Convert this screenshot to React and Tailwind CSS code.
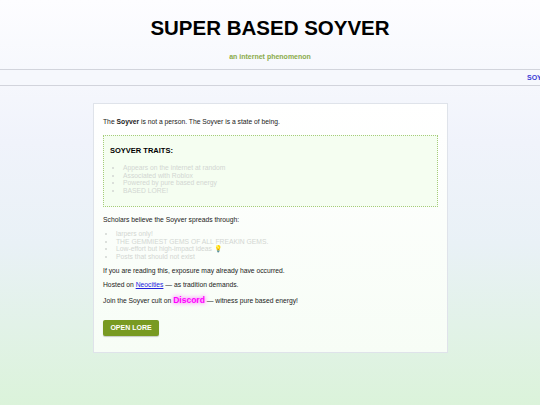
export default function App() {
  const traits = [
    "Appears on the internet at random",
    "Associated with Roblox",
    "Powered by pure based energy",
    "BASED LORE!",
  ];
  const spreads = [
    "larpers only!",
    "THE GEMMIEST GEMS OF ALL FREAKIN GEMS.",
    "Low-effort but high-impact ideas 💡",
    "Posts that should not exist",
  ];

  return (
    <div
      className="min-h-[405px] w-[540px] overflow-hidden bg-[linear-gradient(to_bottom,#fdfdff_0%,#f0f3fb_35%,#e9f1f6_60%,#dbf3da_100%)] text-[#222] text-[6.75px] leading-[7.8px]"
      style={{ fontFamily: '"Liberation Sans", Arial, sans-serif' }}
    >
      <header className="pt-[15px] text-center">
        <h1 className="text-[20.5px] font-bold leading-[26px] text-black">SUPER BASED SOYVER</h1>
        <p className="mt-[11px] text-[7px] font-bold leading-[9px] text-[#8aab4a]">an internet phenomenon</p>
      </header>

      <nav className="mt-[8px] h-[17px] overflow-hidden border-y border-[#d2d4dc] bg-[#f6f8fd]">
        <div className="whitespace-nowrap pl-[527px] pt-[3px] text-[7px] font-bold leading-[10px] text-[#3b3bd6]">
          SOYVER IS EVERYWHERE
        </div>
      </nav>

      <main className="px-[93px] pt-[17px] pb-[53px]">
        <section className="w-[355px] border border-[#dfe3ea] bg-[linear-gradient(to_bottom,#ffffff,#f7fdf6)] px-[9px] pt-[14px] pb-[16px]">
          <p>
            The <b>Soyver</b> is not a person. The Soyver is a state of being.
          </p>

          <div className="mt-[9px] border border-dotted border-[#a6cc7a] bg-[#f5fef1] px-[6px] pt-[10px] pb-[11px]">
            <h3 className="text-[7.5px] font-bold leading-[9px] text-black">SOYVER TRAITS:</h3>
            <ul className="mt-[9px] list-disc pl-[13px] text-[#d2d6d2]">
              {traits.map((t) => (
                <li key={t}>{t}</li>
              ))}
            </ul>
          </div>

          <p className="mt-[9px]">Scholars believe the Soyver spreads through:</p>
          <ul className="mt-[6px] list-disc pl-[13px] text-[#d2d6d2]">
            {spreads.map((s) => (
              <li key={s}>{s}</li>
            ))}
          </ul>

          <p className="mt-[6px]">If you are reading this, exposure may already have occurred.</p>
          <p className="mt-[6px]">
            Hosted on <a className="text-[#2222dd] underline">Neocities</a> — as tradition demands.
          </p>
          <p className="mt-[8px]">
            Join the Soyver cult on{" "}
            <span className="text-[8.5px] font-bold text-[#ff00ff] [text-shadow:0_0_4px_#ff33ff]">Discord</span> — witness pure
            based energy!
          </p>

          <button className="mt-[16px] h-[16px] w-[56px] rounded-[2px] bg-[#789a22] text-[7px] font-bold text-white shadow-[0_1px_1px_rgba(0,0,0,0.2)]">
            OPEN LORE
          </button>
        </section>
      </main>
    </div>
  );
}
